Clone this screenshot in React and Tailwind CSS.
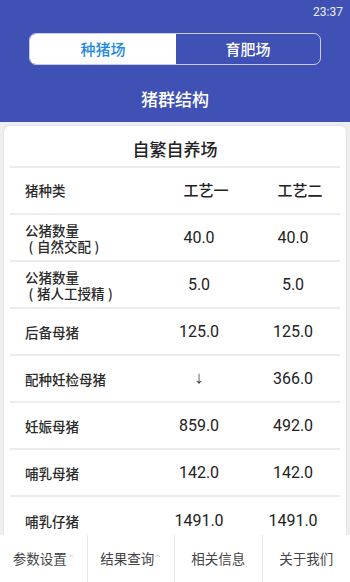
import { ChevronUp } from 'lucide-react'

const FONT = { fontFamily: '"Noto Sans CJK SC", "Noto Sans", sans-serif' }
const NUM = { fontFamily: 'Roboto, "Noto Sans CJK SC", sans-serif' }

const rows = [
  { label: ['公猪数量', '自然交配'], a: '40.0', b: '40.0' },
  { label: ['公猪数量', '猪人工授精'], a: '5.0', b: '5.0' },
  { label: ['后备母猪'], a: '125.0', b: '125.0' },
  { label: ['配种妊检母猪'], a: '↓', b: '366.0' },
  { label: ['妊娠母猪'], a: '859.0', b: '492.0' },
  { label: ['哺乳母猪'], a: '142.0', b: '142.0' },
  { label: ['哺乳仔猪'], a: '1491.0', b: '1491.0' },
]

const tabs = [
  { label: '参数设置', caret: true },
  { label: '结果查询', caret: true },
  { label: '相关信息' },
  { label: '关于我们' },
]

function Row({ row, last }) {
  return (
    <div className={`grid grid-cols-[142px_94px_94px] h-[47px] items-center ${last ? '' : 'border-b-2 border-[#ececec]'}`}>
      <div className="pl-[15px] text-[13.5px] leading-[16px] font-medium text-[#2a2a2a]">
        <div className="whitespace-nowrap">{row.label[0]}</div>
        {row.label[1] && (
          <div className="whitespace-nowrap flex">
            <span className="w-[12px] text-center">(</span>
            <span>{row.label[1]}</span>
            <span className="w-[12px] text-center">)</span>
          </div>
        )}
      </div>
      {row.a === '↓' ? (
        <div className="text-center text-[11px] text-[#333]">↓</div>
      ) : (
        <div style={NUM} className="text-center text-[16px] text-[#222]">{row.a}</div>
      )}
      <div style={NUM} className="text-center text-[16px] text-[#222]">{row.b}</div>
    </div>
  )
}

export default function App() {
  return (
    <div style={FONT} className="w-[350px] h-[582px] flex flex-col bg-[#eeeeee] overflow-hidden">
      {/* 헤더 */}
      <div className="bg-[#3f51b5] h-[122px] shrink-0 flex flex-col">
        <div className="h-[24px] flex items-center justify-end pr-[7px] text-[12px] text-white/90" style={NUM}>23:37</div>
        <div className="mt-[9px] mx-[29px] h-[32px] flex rounded-[7px] border border-white/70 overflow-hidden">
          <div className="w-[146px] bg-white flex items-center justify-center text-[15px] font-medium text-[#1e88e5]">种猪场</div>
          <div className="flex-1 flex items-center justify-center text-[15px] font-medium text-white">育肥场</div>
        </div>
        <div className="flex-1 flex items-center justify-center pt-[10px] text-[17px] font-medium text-white">猪群结构</div>
      </div>

      {/* 카드 */}
      <div className="flex-1 min-h-0 px-[4px] pt-[4px]">
        <div className="bg-white rounded-t-[6px] h-full px-[6px] shadow-[0_0_2px_rgba(0,0,0,0.12)]">
          <div className="h-[42px] flex items-center justify-center pt-[6px] border-b-2 border-[#ececec] text-[17px] font-medium text-[#222]">自繁自养场</div>
          <div className="grid grid-cols-[142px_94px_94px] h-[47px] items-center border-b-2 border-[#ececec]">
            <div className="pl-[15px] text-[13.5px] font-medium text-[#2a2a2a]">猪种类</div>
            <div className="pl-[14px] text-center text-[15px] font-medium text-[#222]">工艺一</div>
            <div className="pl-[14px] text-center text-[15px] font-medium text-[#222]">工艺二</div>
          </div>
          {rows.map((r, i) => (
            <Row key={i} row={r} last={i === rows.length - 1} />
          ))}
        </div>
      </div>

      {/* 하단 탭 */}
      <div className="h-[47px] shrink-0 bg-white grid grid-cols-4">
        {tabs.map((t, i) => (
          <div key={i} className={`flex items-center justify-center text-[13.5px] text-[#444] ${i < 3 ? 'border-r border-[#e6e6e6]' : ''}`}>
            <span>{t.label}</span>
            {t.caret && <ChevronUp size={6} strokeWidth={3} className="text-[#aaa] -mt-[6px] ml-[1px]" />}
          </div>
        ))}
      </div>
    </div>
  )
}
